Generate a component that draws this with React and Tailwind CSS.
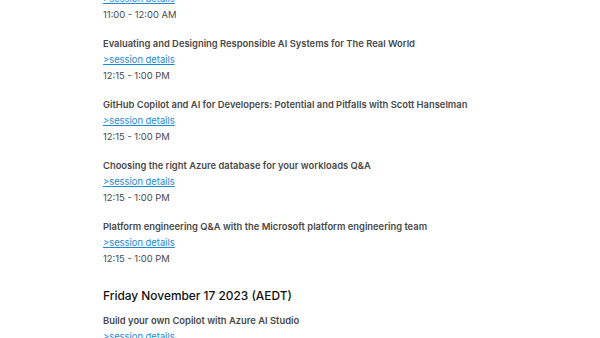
import React from 'react';

const sessions = [
  { title: 'Evaluating and Designing Responsible AI Systems for The Real World', time: '12:15 - 1:00 PM' },
  { title: 'GitHub Copilot and AI for Developers: Potential and Pitfalls with Scott Hanselman', time: '12:15 - 1:00 PM' },
  { title: 'Choosing the right Azure database for your workloads Q&A', time: '12:15 - 1:00 PM' },
  { title: 'Platform engineering Q&A with the Microsoft platform engineering team', time: '12:15 - 1:00 PM' },
];

function Session({ title, time, className = 'mt-[13px]' }) {
  return (
    <div className={`${className} text-[9.4px] leading-4`}>
      <p className="font-semibold text-[#4a4a4a]">{title}</p>
      <a href="#" className="text-[#1a8ad4] underline">&gt;session details</a>
      <p className="text-[#4a4a4a]">{time}</p>
    </div>
  );
}

export default function App() {
  return (
    <div className="h-[338px] overflow-hidden bg-white font-['Inter',sans-serif]">
      <div className="-mt-[9px] pl-[103px]">
        <div className="text-[9.4px] leading-4">
          <a href="#" className="text-[#1a8ad4] underline">&gt;session details</a>
          <p className="text-[#4a4a4a]">11:00 - 12:00 AM</p>
        </div>
        {sessions.map((s, i) => (
          <Session key={i} {...s} />
        ))}
        <h2 className="mt-[19px] text-[11.9px] leading-5 font-medium text-[#111]">Friday November 17 2023 (AEDT)</h2>
        <Session className="mt-[7px]" title="Build your own Copilot with Azure AI Studio" time="12:15 - 1:00 PM" />
      </div>
    </div>
  );
}
